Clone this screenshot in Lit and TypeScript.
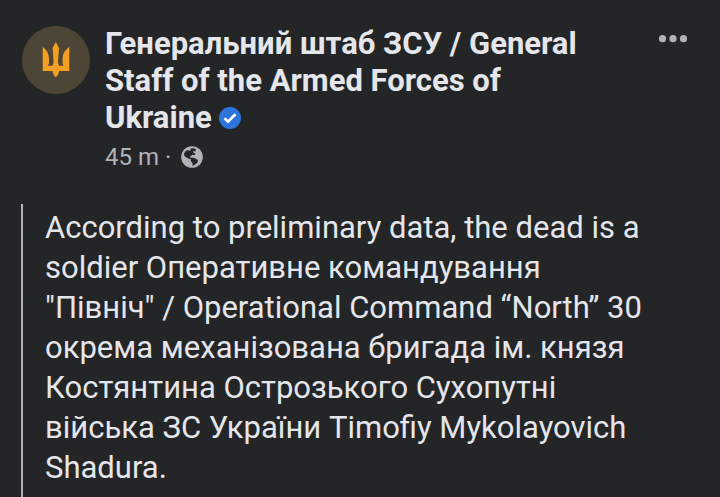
import { LitElement, html, css, svg } from "lit";
import { customElement, property } from "lit/decorators.js";

const trident = svg`
  <path fill="#f59f22" d="M20.700 21 C24.500 23.500 26.800 27.500 27 32.500 L27 36.500 C27 38 26.500 39 25.800 39.700 L30.400 39.700 C31.400 38 31.800 36 31.400 33 L30.600 22 L33.800 16 L37 22 L36.200 33 C35.800 36 36.200 38 37.200 39.700 L41.800 39.700 C41.100 39 40.600 38 40.600 36.500 L40.600 32.500 C40.800 27.500 43.500 23.500 47.300 21 L47.300 45 L37.200 45 C36.600 48 35.400 50 33.800 51.500 C32.200 50 31 48 30.400 45 L20.700 45 Z"></path>`;

@customElement("post-header")
export class PostHeader extends LitElement {
  @property() author = "";
  @property() age = "";

  static styles = css`
    :host {
      display: grid;
      grid-template-columns: 68px minmax(0, 1fr) 32px;
      column-gap: 15px;
      align-items: start;
      padding-left: 1px;
    }
    .avatar {
      display: block;
      width: 68px;
      height: 68px;
      margin-top: 1px;
    }
    .name {
      margin: 0;
      padding-right: 56px;
      font-size: 31px;
      line-height: 37px;
      font-weight: 700;
      color: #e4e6eb;
    }
    .name a {
      color: inherit;
      text-decoration: none;
    }
    .verified {
      width: 22px;
      height: 22px;
      vertical-align: -1px;
    }
    .meta {
      display: flex;
      align-items: center;
      gap: 10px;
      margin-top: 4px;
      font-size: 24px;
      line-height: 34px;
      color: #b0b3b8;
    }
    .globe {
      width: 22px;
      height: 22px;
    }
    .more {
      display: block;
      width: 32px;
      height: 30px;
      padding: 0;
      border: 0;
      background: none;
      color: #b0b3b8;
    }
    .more svg {
      display: block;
      width: 32px;
      height: 30px;
    }
  `;

  render() {
    return html`
      <svg class="avatar" viewBox="0 0 68 68" aria-hidden="true">
        <circle cx="34" cy="34" r="34" fill="#4d4637"></circle>
        ${trident}
      </svg>
      <div>
        <h1 class="name">
          <a href="#">${this.author}</a>
          <svg class="verified" viewBox="0 0 22 22" role="img" aria-label="Verified">
            <circle cx="11" cy="11" r="11" fill="#2d73dc"></circle>
            <path d="M5.500 11.300 L9 14.600 L16.500 7.200" fill="none" stroke="#fff" stroke-width="2.600"></path>
          </svg>
        </h1>
        <div class="meta">
          <span>${this.age} ·</span>
          <svg class="globe" viewBox="0 0 22 22" role="img" aria-label="Public">
            <circle cx="11" cy="11" r="10.800" fill="#b0b3b8"></circle>
            <path fill="#242527" d="M9.500 2.400 L13 2.200 L15 3.600 L14.200 5.400 L12.200 5 L12.600 7 L14.600 7.600 L13.400 9.200 L11.400 8.800 L9.200 10.600 L9.600 12 L11.400 11.600 L14.600 12.400 L17 14.200 L16.400 16.800 L14 18.400 L12.400 19.800 L11.400 19.400 L11.600 17 L9.800 15.200 L9.800 13.200 L6.600 12.200 L3.400 10 L3 7.600 L5 4.800 L7 4 L8 5 L9.600 4.200 Z"></path>
          </svg>
        </div>
      </div>
      <button class="more" type="button" aria-label="More options">
        <svg viewBox="0 0 32 30" fill="currentColor" aria-hidden="true">
          <circle cx="5.500" cy="13.700" r="3.600"></circle>
          <circle cx="16" cy="13.700" r="3.600"></circle>
          <circle cx="26.500" cy="13.700" r="3.600"></circle>
        </svg>
      </button>
    `;
  }
}

@customElement("app-root")
export class AppRoot extends LitElement {
  static styles = css`
    :host {
      display: block;
      background: #242527;
      font-family: Roboto, "Noto Sans", sans-serif;
    }
    .post {
      display: flex;
      flex-direction: column;
      gap: 30px;
      box-sizing: border-box;
      min-height: 100vh;
      padding: 25px 31px 0 21px;
    }
    .quote {
      flex: 1;
      margin: 0;
      padding: 4px 32px 8px 22px;
      border-left: 2px solid #b0b3b8;
      font-size: 31px;
      line-height: 40px;
      color: #e4e6eb;
    }
  `;

  render() {
    return html`
      <article class="post">
        <post-header
          author="Генеральний штаб ЗСУ / General Staff of the Armed Forces of Ukraine"
          age="45 m"
        ></post-header>
        <blockquote class="quote">
          According to preliminary data, the dead is a soldier Оперативне
          командування "Північ" / Operational Command “North” 30 окрема
          механізована бригада ім. князя Костянтина Острозького Сухопутні
          війська ЗС України Timofiy Mykolayovich Shadura.
        </blockquote>
      </article>
    `;
  }
}
